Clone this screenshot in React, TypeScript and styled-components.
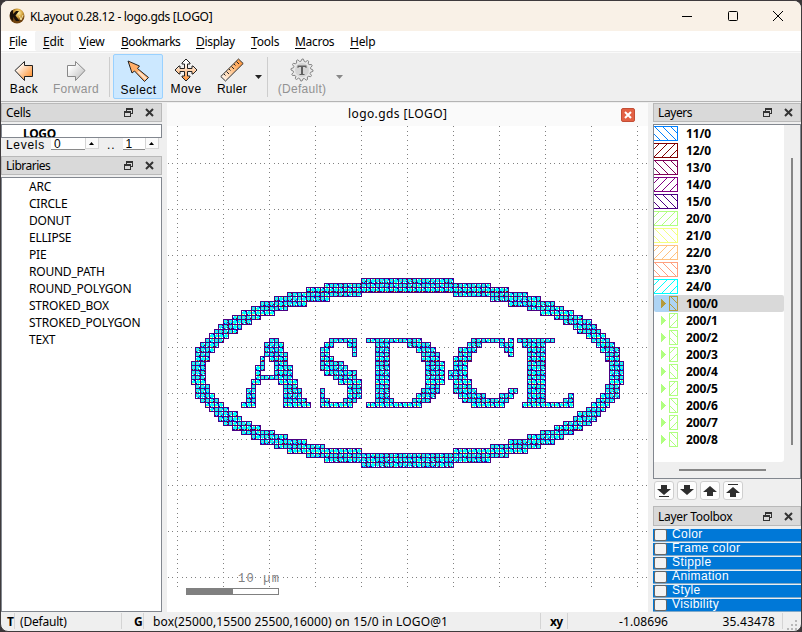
import React from "react";
import styled, { createGlobalStyle, css } from "styled-components";

const UI = `"Noto Sans", "Open Sans", sans-serif`;
const BITMAP = `"Liberation Sans", "Roboto", sans-serif`;

const GlobalStyle = createGlobalStyle`
  * { box-sizing: border-box; }
  body { margin: 0; background: #3a3638; overflow: hidden; }
  svg { display: block; flex: none; }
`;

const Window = styled.div`
  width: 802px;
  height: 632px;
  border: 1px solid #3f3b3d;
  border-radius: 8px;
  overflow: hidden;
  background: #efefef;
  color: #000;
  font: 12px/17px ${UI};
  white-space: nowrap;
  display: flex;
  flex-direction: column;
`;

const Text = styled.span<{ $ls?: number; $size?: number; $bold?: boolean; $bitmap?: boolean; $ml?: number; $mr?: number }>`
  letter-spacing: ${(p) => p.$ls ?? 0}px;
  font-size: ${(p) => p.$size ?? 12}px;
  font-weight: ${(p) => (p.$bold ? 700 : 400)};
  margin-left: ${(p) => p.$ml ?? 0}px;
  margin-right: ${(p) => p.$mr ?? 0}px;
  ${(p) => p.$bitmap && css`font-family: ${BITMAP};`}
`;

const TitleBar = styled.header`
  height: 30px;
  flex: none;
  background: #f9f1e7;
  display: flex;
  align-items: center;
  padding-left: 8px;
  gap: 5px;
`;
const Caption = styled.div`
  margin-left: auto;
  display: flex;
`;
const CaptionButton = styled.div`
  width: 45.5px;
  height: 30px;
  display: grid;
  place-items: center;
`;

const MenuBar = styled.nav`
  height: 22px;
  flex: none;
  background: #fff;
  border-bottom: 1px solid #fafafa;
  box-shadow: inset 0 -1px #eee;
  display: flex;
`;
const MenuItem = styled.div<{ $w: number; $hot?: boolean }>`
  width: ${(p) => p.$w}px;
  height: 20px;
  padding-left: 8px;
  line-height: 21px;
  border-radius: 2px;
  background: ${(p) => (p.$hot ? "#f3f3f3" : "transparent")};
  u { text-underline-offset: 2px; }
`;

const ToolBar = styled.div`
  height: 49px;
  flex: none;
  display: flex;
  padding-top: 1px;
  border-bottom: 1px solid #b4b4b4;
`;
const Tool = styled.div<{ $w: number; $active?: boolean; $off?: boolean }>`
  width: ${(p) => p.$w}px;
  height: 45px;
  border: 1px solid ${(p) => (p.$active ? "#99d1ff" : "transparent")};
  background: ${(p) => (p.$active ? "#cce8ff" : "transparent")};
  color: ${(p) => (p.$off ? "#929292" : "#000")};
  border-radius: 2px;
  display: flex;
  flex-direction: column;
  align-items: center;
  padding-top: ${(p) => (p.$active ? 4 : 3)}px;
  line-height: 15px;
`;
const Separator = styled.div<{ $l: number; $r: number }>`
  width: 1px;
  height: 40px;
  margin: 3px ${(p) => p.$r}px 0 ${(p) => p.$l}px;
  background: #cdcdcd;
`;
const Drop = styled.div<{ $color: string; $ml?: number }>`
  width: 7px;
  height: 4px;
  margin: 21px 0 0 ${(p) => p.$ml ?? 0}px;
  background: ${(p) => p.$color};
  clip-path: polygon(0 0, 100% 0, 50% 100%);
`;

const Body = styled.main`
  height: 509px;
  flex: none;
  display: grid;
  grid-template-columns: 161px 481px 148px;
  column-gap: 5px;
  padding-top: 1px;
`;
const Dock = styled.section`
  display: flex;
  flex-direction: column;
  min-width: 0;
`;
const DockHeader = styled.div<{ $h?: number }>`
  height: ${(p) => p.$h ?? 19}px;
  flex: none;
  margin-bottom: 2px;
  padding: 0 7px 0 4px;
  border: 1px solid #b9b9b9;
  background: #d9d9d9;
  display: flex;
  align-items: center;
  svg:first-of-type { margin-left: auto; }
  svg + svg { margin-left: 12px; }
`;

const CellBox = styled.div`
  height: 14px;
  flex: none;
  border: 1px solid #82878f;
  background: #fff;
  overflow: hidden;
  padding-left: 21px;
  line-height: 17px;
`;
const Levels = styled.div`
  height: 18px;
  flex: none;
  padding-left: 5px;
  display: flex;
  line-height: 15px;
`;
const Spin = styled.div<{ $w: number; $ml: number }>`
  width: ${(p) => p.$w}px;
  height: 12px;
  margin-left: ${(p) => p.$ml}px;
  padding-left: 3px;
  overflow: hidden;
  background: #fff;
  border-bottom: 1px solid #8a8a8a;
  line-height: 11px;
`;
const SpinButton = styled.div`
  width: 14px;
  height: 11px;
  border: 1px solid #d5d5d5;
  border-top: 0;
  background: #fbfbfb;
  display: grid;
  place-items: center;
`;
const LibraryList = styled.div`
  flex: 1;
  border: 1px solid #82878f;
  background: #fff;
  padding: 0 0 0 27px;
  line-height: 17px;
`;

const View = styled.section`
  display: flex;
  flex-direction: column;
  background: #fff;
`;
const ViewTab = styled.div`
  height: 23px;
  background: #fafafa;
  display: flex;
  align-items: center;
  justify-content: flex-end;
  padding-right: 13px;
`;
const ViewTitle = styled.div`
  width: 99px;
  height: 19px;
  margin-right: 174px;
`;

const LayerList = styled.div`
  height: 355px;
  flex: none;
  border: 1px solid #82878f;
  background: #efefef;
  display: grid;
  grid-template: 337px 16px / 130px 16px;
`;
const LayerRows = styled.div`
  background: #fff;
  border-radius: 0 0 3px 0;
`;
const LayerRow = styled.div<{ $sel?: boolean }>`
  height: 17px;
  display: flex;
  align-items: center;
  line-height: 17px;
  gap: 8px;
  border-radius: 2px;
  background: ${(p) => (p.$sel ? "linear-gradient(90deg,#aed4f4 24px,#d9d9d9 24px)" : "transparent")};
`;
const VThumb = styled.div`
  width: 2px;
  height: 287px;
  margin: 33px 0 0 7px;
  background: #868686;
`;
const HThumb = styled.div`
  width: 87px;
  height: 2px;
  margin: 7px 0 0 25px;
  background: #868686;
`;
const Buttons = styled.div`
  height: 27px;
  flex: none;
  display: flex;
  gap: 3px;
  padding: 2px 0 0 1px;
`;
const IconButton = styled.div`
  width: 20px;
  height: 19px;
  border: 1px solid #cfcfcf;
  border-radius: 3px;
  background: #fdfdfd;
  display: grid;
  place-items: center;
`;
const ToolboxRow = styled.div`
  height: 14px;
  overflow: hidden;
  display: flex;
  border-bottom: 1px solid #7fa8c8;
  box-shadow: inset 0 1px #e6eef5;
  background: #0078d7;
  color: #fff;
  line-height: 13px;
`;
const CheckBox = styled.div`
  width: 13px;
  height: 12px;
  margin: 1px 5px 0 1px;
  border: 1px solid #666;
  border-radius: 2px;
  background: #f3f3f3;
`;

const StatusBar = styled.footer`
  height: 20px;
  display: grid;
  grid-template-columns: 14px 107px 22px 396px 1px 27px 215px 1fr;
  align-items: center;
  line-height: 20px;
`;
const StatusCell = styled.div<{ $pl?: number; $line?: boolean; $right?: boolean }>`
  height: 16px;
  line-height: 17px;
  padding-left: ${(p) => p.$pl ?? 0}px;
  border-right: 1px solid ${(p) => (p.$line ? "#d4d4d4" : "transparent")};
  display: flex;
  justify-content: ${(p) => (p.$right ? "space-between" : "flex-start")};
`;

/* ---- artwork geometry: row -> [first column, end column) pairs on a 0.5 um raster ---- */
const EDGE: Record<number, number[]> = {
  25: [40, 60], 26: [32, 68], 27: [28, 72], 28: [24, 40, 60, 76], 29: [21, 33, 68, 79],
  30: [18, 28, 72, 82], 31: [16, 24, 76, 84], 32: [14, 21, 79, 86], 33: [12, 18, 82, 88],
  34: [10, 16, 84, 90], 35: [9, 14, 86, 91], 36: [8, 13, 87, 92], 37: [7, 11, 89, 93],
  38: [6, 10, 90, 94], 39: [5, 9, 91, 95], 40: [4, 8, 92, 96], 41: [4, 7, 93, 96],
  42: [4, 7, 93, 96], 43: [3, 6, 94, 97], 44: [3, 6, 94, 97], 45: [3, 6, 94, 97],
};
const LETTERS: Record<number, number[]> = {
  38: [20, 22, 33, 39, 41, 53, 64, 71, 72, 73, 74, 82],
  39: [19, 23, 32, 34, 37, 39, 43, 46, 50, 55, 63, 66, 70, 73, 75, 80],
  40: [19, 23, 31, 33, 38, 39, 43, 46, 52, 56, 61, 65, 71, 73, 76, 80],
  41: [19, 24, 31, 33, 38, 39, 43, 46, 53, 57, 61, 64, 72, 73, 76, 80],
  42: [18, 19, 20, 24, 31, 34, 43, 46, 53, 57, 60, 64, 76, 80],
  43: [18, 19, 21, 24, 31, 36, 43, 46, 54, 58, 60, 63, 76, 80],
  44: [17, 19, 21, 25, 31, 37, 43, 46, 54, 58, 60, 63, 76, 80],
  45: [17, 18, 21, 25, 32, 39, 43, 46, 54, 58, 59, 63, 76, 80],
  46: [17, 25, 34, 39, 43, 46, 54, 58, 59, 63, 76, 80],
  47: [16, 18, 22, 26, 35, 40, 43, 46, 54, 58, 60, 64, 76, 80],
  48: [16, 17, 23, 26, 37, 40, 43, 46, 54, 57, 60, 64, 76, 80],
  49: [15, 17, 23, 27, 31, 32, 37, 40, 43, 46, 53, 57, 60, 65, 72, 74, 76, 80],
  50: [15, 17, 23, 27, 31, 32, 37, 40, 43, 46, 52, 56, 61, 67, 70, 73, 76, 80, 85, 86],
  51: [15, 17, 23, 28, 31, 33, 36, 39, 43, 47, 51, 55, 62, 72, 76, 80, 84, 86],
  52: [14, 17, 23, 29, 31, 38, 41, 53, 64, 71, 75, 86],
};
const cells: [number, number][] = [];
for (let r = 25; r <= 65; r++) {
  const edge = r === 61 ? [21, 32, 68, 79] : EDGE[r] ?? EDGE[90 - r];
  for (const spans of [edge, LETTERS[r] ?? []])
    for (let i = 0; i < spans.length; i += 2)
      for (let c = spans[i]; c < spans[i + 1]; c++) cells.push([c, r]);
}
const px = (c: number) => Math.round(10 + 4.6 * c);
const py = (r: number) => Math.round(37 + 4.6 * r);

const SPECKS = ["#ffffff", "#0000ff", "#800000", "#ffffff", "#800057", "#0080ff", "#800057"];

function Artwork() {
  const frames: string[] = [];
  const fill: string[] = [];
  const specks: Record<string, string[]> = {};
  const dot = (x: number, y: number, color: string) => {
    (specks[color] ??= []).push(`M${x} ${y}h1v1h-1z`);
  };
  for (const [c, r] of cells) {
    const x = px(c), y = py(r) - 23, w = px(c + 1) - x, h = py(r + 1) - 23 - y;
    frames.push(`M${x} ${y}h${w + 1}v${h + 1}h${-w - 1}z`);
    fill.push(`M${x + 1} ${y + 1}h${w - 1}v${h - 1}h${1 - w}z`);
    const n = c * 3 + r * 5;
    if (r % 5 === 2 || c % 5 === 2) {
      dot(x + 1, y + 1, "#ffffff");
      dot(x + w - 1, y + 1, n % 2 ? "#ffff40" : "#0000c0");
      dot(x + 1, y + h - 1, n % 2 ? "#0000c0" : "#ffff40");
      dot(x + w - 1, y + h - 1, n % 3 ? "#ffffff" : "#800000");
      if (r % 5 === 2) dot(x + 2, y + h - 1, n % 3 ? "#ffff80" : "#800057");
    } else {
      dot(x + 2, y + 2, "#ffa080");
      if (w === 5) {
        dot(x + 4, y + 1, SPECKS[n % 7]);
        dot(x + 4, y + 3, SPECKS[(n + 2) % 7]);
      }
      if (h === 5) {
        dot(x + 1, y + 4, SPECKS[(n + 4) % 7]);
        dot(x + 3, y + 4, SPECKS[(n + 1) % 7]);
      }
    }
  }
  const dots: string[] = [];
  for (let i = 0; i <= 10; i++)
    for (let j = -8; j < 98; j++) {
      const y = py(j) - 23;
      if (y >= 0 && y < 485) dots.push(`M${10 + 46 * i} ${y}h1v1h-1z`);
    }
  for (let i = 0; i <= 9; i++)
    for (let j = -2; j < 103; j++) {
      const x = px(j);
      if (x >= 0 && x < 481) dots.push(`M${x} ${14 + 23 + 46 * i}h1v1h-1z`);
    }
  return (
    <svg width="481" height="485" shapeRendering="crispEdges">
      <path d={dots.join("")} fill="#808080" />
      <g transform="translate(0 23)">
        <path d={frames.join("")} fill="#4b0082" />
        <path d={fill.join("")} fill="#00ffff" />
        {Object.entries(specks).map(([color, d]) => (
          <path key={color} d={d.join("")} fill={color} />
        ))}
      </g>
      <rect x="19.5" y="462.5" width="92" height="6" fill="#fff" stroke="#808080" />
      <rect x="19" y="462" width="47" height="7" fill="#808080" />
      <text x="71" y="456" fill="#808080" fontFamily="Liberation Mono, monospace" fontSize="12" textLength="41">10 µm</text>
    </svg>
  );
}

const orange = "url(#orange)";
const Defs = () => (
  <defs>
    <linearGradient id="orange" x1="0" y1="0" x2="1" y2="1">
      <stop offset="0.2" stopColor="#fff" />
      <stop offset="0.8" stopColor="#ff9e47" />
    </linearGradient>
    <linearGradient id="orangeDown" x1="0" y1="0" x2="0" y2="1">
      <stop offset="0.2" stopColor="#fff" />
      <stop offset="1" stopColor="#ff8d2c" />
    </linearGradient>
    <linearGradient id="orangeRule" x1="1" y1="0" x2="0" y2="1">
      <stop offset="0" stopColor="#ff8d2c" />
      <stop offset="0.5" stopColor="#ffc48c" />
      <stop offset="1" stopColor="#fff" />
    </linearGradient>
    <linearGradient id="grey" x1="0" y1="0" x2="1" y2="1">
      <stop offset="0.2" stopColor="#fff" />
      <stop offset="1" stopColor="#b8b8b8" />
    </linearGradient>
  </defs>
);

const AppIcon = () => (
  <svg width="16" height="16" viewBox="0 0 16 16">
    <defs>
      <radialGradient id="gold" cx="0.6" cy="0.3">
        <stop offset="0" stopColor="#fff3ad" />
        <stop offset="0.5" stopColor="#d9a943" />
        <stop offset="1" stopColor="#70430f" />
      </radialGradient>
    </defs>
    <circle cx="8" cy="8" r="7.5" fill="url(#gold)" />
    <path d="M1 5Q2 2 4 2v4l3-3h3L6.500 7.500L10.500 13H7L4 9v4Q0 10 1 5" fill="#1c1208" />
    <path d="M10.500 8l1.500 4 2-5" fill="none" stroke="#f7e3a0" />
  </svg>
);
const BackIcon = () => (
  <svg width="24" height="24">
    <Defs />
    <path d="M3 12.500L12.500 3.500V7.500H20.500V18.500H12.500V22.500Z" fill={orange} stroke="#222" />
  </svg>
);
const ForwardIcon = () => (
  <svg width="24" height="24">
    <path d="M21 12.500L11.500 3.500V7.500H3.500V18.500H11.500V22.500Z" fill="url(#grey)" stroke="#888" />
  </svg>
);
const SelectIcon = () => (
  <svg width="24" height="24">
    <path d="M2 2L13.500 7L11.500 9.500L22.500 18.500L18.500 22.500L8.500 12L6 14Z" fill="#ffae69" stroke="#222" strokeLinejoin="round" />
    <path d="M13 12L21 19L19 21L11 13Z" fill="#fff" opacity="0.6" />
  </svg>
);
const MoveIcon = () => (
  <svg width="24" height="24">
    <path d="M12 1L16 5V6H13.500V10.500H18V8H19L23 12L19 16H18V13.500H13.500V18H16V19L12 23L8 19V18H10.500V13.500H6V16H5L1 12L5 8H6V10.500H10.500V6H8V5Z" fill="url(#orangeDown)" stroke="#222" />
  </svg>
);
const RulerIcon = () => (
  <svg width="24" height="24">
    <path d="M.8 18.500L18.500 1L23.200 5.500L5.500 23Z" fill="url(#orangeRule)" stroke="#333" />
    <path d="M4 16l1.500 1.500M6.500 13.500L9 16M9 11l1.500 1.500M11.500 8.500L14 11M14 6l1.500 1.500M16.500 3.500L19 6" stroke="#222" />
  </svg>
);
const gear = Array.from({ length: 48 }, (_, i) => {
  const a = (i * Math.PI) / 24;
  const r = i % 4 < 2 ? 11 : 8.8;
  return `${(12 + r * Math.cos(a)).toFixed(1)},${(12 + r * Math.sin(a)).toFixed(1)}`;
}).join(" ");
const TextGearIcon = () => (
  <svg width="24" height="24">
    <polygon points={gear} fill="#e8e8e8" stroke="#858585" />
    <circle cx="12" cy="12" r="7" fill="#d4d4d4" />
    <path d="M7.500 7.500H16.500V10H15.500V9H13V16H14.500V17H9.500V16H11V9H8.500V10H7.500Z" fill="#5f5f5f" />
  </svg>
);
const FloatIcon = () => (
  <svg width="9" height="9" shapeRendering="crispEdges">
    <path d="M2 0h7v2h-7zM2 2h1v1h-1zM8 2h1v4h-1zM7 5h1v1h-1z" fill="#333" />
    <path fillRule="evenodd" d="M0 3h7v6h-7zM1 5h5v3h-5z" fill="#333" />
  </svg>
);
const CrossIcon = () => (
  <svg width="9" height="9">
    <path d="M1 1L8 8M8 1L1 8" stroke="#333" strokeWidth="2" />
  </svg>
);
const Header = ({ title, ls, h }: { title: string; ls: number; h?: number }) => (
  <DockHeader $h={h}>
    <Text $ls={ls}>{title}</Text>
    <FloatIcon />
    <CrossIcon />
  </DockHeader>
);

const LAYERS: [string, string][] = [
  ["11/0", "#0080ff"], ["12/0", "#800000"], ["13/0", "#800057"], ["14/0", "#800080"], ["15/0", "#4b0082"],
  ["20/0", "#b0ff80"], ["21/0", "#f3ff80"], ["22/0", "#ffc280"], ["23/0", "#ffa080"], ["24/0", "#00ffff"],
  ["100/0", "#b59a3c"], ["200/1", "#b0ff80"], ["200/2", "#b0ff80"], ["200/3", "#b0ff80"], ["200/4", "#b0ff80"],
  ["200/5", "#b0ff80"], ["200/6", "#b0ff80"], ["200/7", "#b0ff80"], ["200/8", "#b0ff80"],
];
function Swatch({ index, color }: { index: number; color: string }) {
  const group = index >= 10;
  const x0 = group ? 15 : 0;
  const back = index % 2 === 0;
  const d: string[] = [];
  for (let y = 0; y < 15; y++)
    for (let x = x0; x < 24; x++) {
      const border = y === 0 || y === 14 || x === 23 || (group && x === x0);
      const hatch = (back ? x - y + 16 : x + y + 3) % 8 === 0;
      if (border || hatch) d.push(`M${x} ${y}h1v1h-1z`);
    }
  return (
    <svg width="24" height="15" shapeRendering="crispEdges">
      {group && index > 10 && <rect x="15" width="9" height="15" fill="#fff" />}
      <path d={d.join("")} fill={color} />
      {group && <path d="M7 3l5 4.500l-5 4.500z" fill={color} />}
    </svg>
  );
}

const ORDER_ICONS = [
  "M4 1h6v4h4l-7 6l-7-6h4zM2 12h10v1H2z",
  "M4 1h6v4h4l-7 6l-7-6h4z",
  "M4 12h6V8h4L7 2L0 8h4z",
  "M4 13h6V9h4L7 3L0 9h4zM2 0h10v1H2z",
];
const MENUS: [string, number, number][] = [
  ["File", 34, -0.3], ["Edit", 36, -0.2], ["View", 42, -0.2], ["Bookmarks", 75, -0.5],
  ["Display", 55, -0.3], ["Tools", 44, -0.2], ["Macros", 55, -0.3], ["Help", 45, -0.2],
];
const LIBRARIES = ["ARC", "CIRCLE", "DONUT", "ELLIPSE", "PIE", "ROUND_PATH", "ROUND_POLYGON", "STROKED_BOX", "STROKED_POLYGON", "TEXT"];
const TOOLBOX = ["Color", "Frame color", "Stipple", "Animation", "Style", "Visibility"];

export default function App() {
  return (
    <Window>
      <GlobalStyle />
      <TitleBar>
        <AppIcon />
        <Text $ls={-0.32}>KLayout 0.28.12 - logo.gds [LOGO]</Text>
        <Caption>
          <CaptionButton><svg width="10" height="1"><rect width="10" height="1" /></svg></CaptionButton>
          <CaptionButton><svg width="10" height="10"><rect x=".5" y=".5" width="9" height="9" rx="1" fill="none" stroke="#000" /></svg></CaptionButton>
          <CaptionButton><svg width="10" height="10"><path d="M0 0L10 10M10 0L0 10" stroke="#000" /></svg></CaptionButton>
        </Caption>
      </TitleBar>
      <MenuBar>
        {MENUS.map(([name, w, ls]) => (
          <MenuItem key={name} $w={w} $hot={name === "Edit"}>
            <Text $ls={ls}><u>{name[0]}</u>{name.slice(1)}</Text>
          </MenuItem>
        ))}
      </MenuBar>
      <ToolBar>
        <Tool $w={46}><BackIcon /><Text $bitmap $ls={0.4}>Back</Text></Tool>
        <Tool $w={58} $off><ForwardIcon /><Text $bitmap $ls={0.3}>Forward</Text></Tool>
        <Separator $l={4} $r={3} />
        <Tool $w={50} $active><SelectIcon /><Text $bitmap $ls={0.4} $ml={1}>Select</Text></Tool>
        <Tool $w={46}><MoveIcon /><Text $bitmap $ls={0.4}>Move</Text></Tool>
        <Tool $w={46}><RulerIcon /><Text $bitmap $ls={0.3}>Ruler</Text></Tool>
        <Drop $color="#222" />
        <Separator $l={5} $r={6} />
        <Tool $w={56} $off><TextGearIcon /><Text $bitmap $ls={0.3}>(Default)</Text></Tool>
        <Drop $color="#888" $ml={6} />
      </ToolBar>
      <Body>
        <Dock>
          <Header title="Cells" ls={-0.3} />
          <CellBox><Text $bold $ls={-0.3}>LOGO</Text></CellBox>
          <Levels>
            <Text $bitmap $ls={0.7}>Levels</Text>
            <Spin $w={34} $ml={6}><Text $bitmap>0</Text></Spin>
            <SpinButton><svg width="5" height="3"><path d="M0 3L2.500 0L5 3z" /></svg></SpinButton>
            <Text $bitmap $ls={1} $ml={8}>..</Text>
            <Spin $w={22} $ml={7}><Text $bitmap>1</Text></Spin>
            <SpinButton><svg width="5" height="3"><path d="M0 3L2.500 0L5 3z" /></svg></SpinButton>
          </Levels>
          <Header title="Libraries" ls={-0.5} />
          <LibraryList>
            {LIBRARIES.map((name) => <div key={name}><Text $ls={-0.22}>{name}</Text></div>)}
          </LibraryList>
        </Dock>
        <View>
          <ViewTab>
            <ViewTitle><Text $ls={0.4}>logo.gds [LOGO]</Text></ViewTitle>
            <svg width="14" height="14">
              <rect x=".5" y=".5" width="13" height="13" rx="1.500" fill="#e36144" stroke="#c34e36" />
              <path d="M4 4L10 10M10 4L4 10" stroke="#fff" strokeWidth="2" />
            </svg>
          </ViewTab>
          <Artwork />
        </View>
        <Dock>
          <Header title="Layers" ls={-0.4} />
          <LayerList>
            <LayerRows>
              {LAYERS.map(([name, color], i) => (
                <LayerRow key={name} $sel={i === 10}>
                  <Swatch index={i} color={color} />
                  <Text $bold $ls={-0.15}>{name}</Text>
                </LayerRow>
              ))}
            </LayerRows>
            <VThumb />
            <HThumb />
          </LayerList>
          <Buttons>
            {ORDER_ICONS.map((d) => (
              <IconButton key={d}><svg width="14" height="14"><path d={d} fill="#2e2e2e" /></svg></IconButton>
            ))}
          </Buttons>
          <Header title="Layer Toolbox" ls={-0.3} h={20} />
          {TOOLBOX.map((name) => (
            <ToolboxRow key={name}><CheckBox /><Text $bitmap $ls={0.4}>{name}</Text></ToolboxRow>
          ))}
        </Dock>
      </Body>
      <StatusBar>
        <StatusCell $pl={6} $line><Text $bold>T</Text></StatusCell>
        <StatusCell $pl={5} $line><Text $ls={-0.2}>(Default)</Text></StatusCell>
        <StatusCell $pl={12} $line><Text $bold>G</Text></StatusCell>
        <StatusCell $pl={9}><Text $ls={0.14}>box(25000,15500 25500,16000) on 15/0 in LOGO@1</Text></StatusCell>
        <StatusCell $line />
        <StatusCell $pl={9} $line><Text $bold $ls={-0.6}>xy</Text></StatusCell>
        <StatusCell $pl={51} $line $right>
          <Text $ls={0.1}>-1.08696</Text>
          <Text $ls={0.15} $mr={7}>35.43478</Text>
        </StatusCell>
        <svg width="16" height="18" fill="#b8b8b8">
          <path d="M12 8h2v2h-2zM8 12h2v2H8zM12 12h2v2h-2zM4 16h2v2H4zM8 16h2v2H8zM12 16h2v2h-2z" />
        </svg>
      </StatusBar>
    </Window>
  );
}
